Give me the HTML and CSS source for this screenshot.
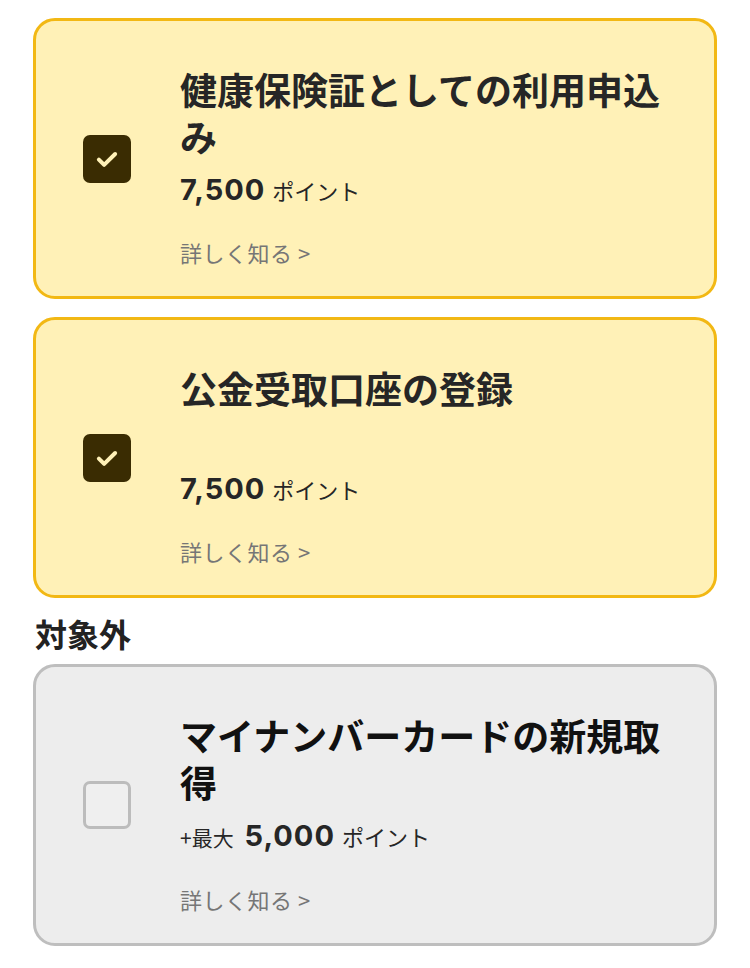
FILE: index.html
```html
<!DOCTYPE html>
<html lang="ja">
<head>
  <meta charset="UTF-8" />
  <title>ポイント申込</title>
  <meta name="viewport" content="width=device-width, initial-scale=1" />
  <link rel="stylesheet" href="styles.css">
</head>
<body>
  <div class="task-list">
    <label class="task-card is-done">
      <span class="check-box">
        <svg viewBox="0 0 24 24" width="30" height="30" aria-hidden="true">
          <path d="M5.5 12.5l4.2 4.2L18.5 8" fill="none" stroke="currentColor" stroke-width="3.2" stroke-linecap="round" stroke-linejoin="round"/>
        </svg>
      </span>
      <div class="task-body">
        <h2 class="task-title">健康保険証としての利用申込み</h2>
        <p class="task-points"><span class="num">7,500</span> ポイント</p>
        <a class="task-more" href="#">詳しく知る &gt;</a>
      </div>
    </label>

    <label class="task-card is-done">
      <span class="check-box">
        <svg viewBox="0 0 24 24" width="30" height="30" aria-hidden="true">
          <path d="M5.5 12.5l4.2 4.2L18.5 8" fill="none" stroke="currentColor" stroke-width="3.2" stroke-linecap="round" stroke-linejoin="round"/>
        </svg>
      </span>
      <div class="task-body">
        <h2 class="task-title">公金受取口座の登録</h2>
        <p class="task-points"><span class="num">7,500</span> ポイント</p>
        <a class="task-more" href="#">詳しく知る &gt;</a>
      </div>
    </label>

    <h3 class="section-label">対象外</h3>

    <label class="task-card is-off">
      <span class="check-box"></span>
      <div class="task-body">
        <h2 class="task-title">マイナンバーカードの新規取得</h2>
        <p class="task-points"><span class="prefix">+最大</span> <span class="num">5,000</span> ポイント</p>
        <a class="task-more" href="#">詳しく知る &gt;</a>
      </div>
    </label>
  </div>
</body>
</html>
```

FILE: styles.css
```css
:root {
  --yellow-bg: #fff1b7;
  --yellow-border: #f2b814;
  --gray-bg: #ededed;
  --gray-border: #bebebe;
  --check-dark: #3a2c02;
  --text-dark: #262626;
  --text-muted: #767676;
}
*, *::before, *::after {
  box-sizing: border-box;
}
body {
  margin: 0;
  background: #fff;
  font-family: "Noto Sans CJK JP", "Noto Sans", sans-serif;
  color: var(--text-dark);
}
.task-list {
  padding: 18px 33px 0;
  display: flex;
  flex-direction: column;
}
.task-card {
  display: flex;
  align-items: center;
  gap: 49px;
  padding: 45px 30px 30px 47px;
  border: 3px solid var(--yellow-border);
  border-radius: 22px;
  background: var(--yellow-bg);
  margin-bottom: 18px;
}
.task-card.is-off {
  background: var(--gray-bg);
  border-color: var(--gray-border);
}
.check-box {
  flex: 0 0 48px;
  width: 48px;
  height: 48px;
  border-radius: 7px;
  background: var(--check-dark);
  color: #fff1b7;
  display: flex;
  align-items: center;
  justify-content: center;
  margin-top: -15px;
}
.is-off .check-box {
  background: #efefef;
  border: 3px solid #bcbcbc;
}
.task-body {
  flex: 1;
  min-width: 0;
}
.task-title {
  margin: 0;
  font-size: 37px;
  line-height: 47px;
  min-height: 94px;
  font-weight: 700;
}
.is-off .task-title {
  color: #111;
}
.task-points {
  margin: 12px 0 0;
  font-size: 22px;
  line-height: 36px;
}
.task-points .num {
  font-family: Inter, "Noto Sans", sans-serif;
  font-size: 29px;
  font-weight: 700;
  letter-spacing: 1px;
  margin-right: 2px;
}
.task-points .prefix {
  font-size: 21px;
  margin-right: 6px;
}
.task-more {
  display: block;
  margin-top: 30px;
  font-size: 22px;
  line-height: 28px;
  letter-spacing: 0.5px;
  color: var(--text-muted);
  text-decoration: none;
}
.section-label {
  margin: -3px 0 11px 2px;
  font-size: 32px;
  line-height: 40px;
  font-weight: 700;
  color: #222;
}
```
